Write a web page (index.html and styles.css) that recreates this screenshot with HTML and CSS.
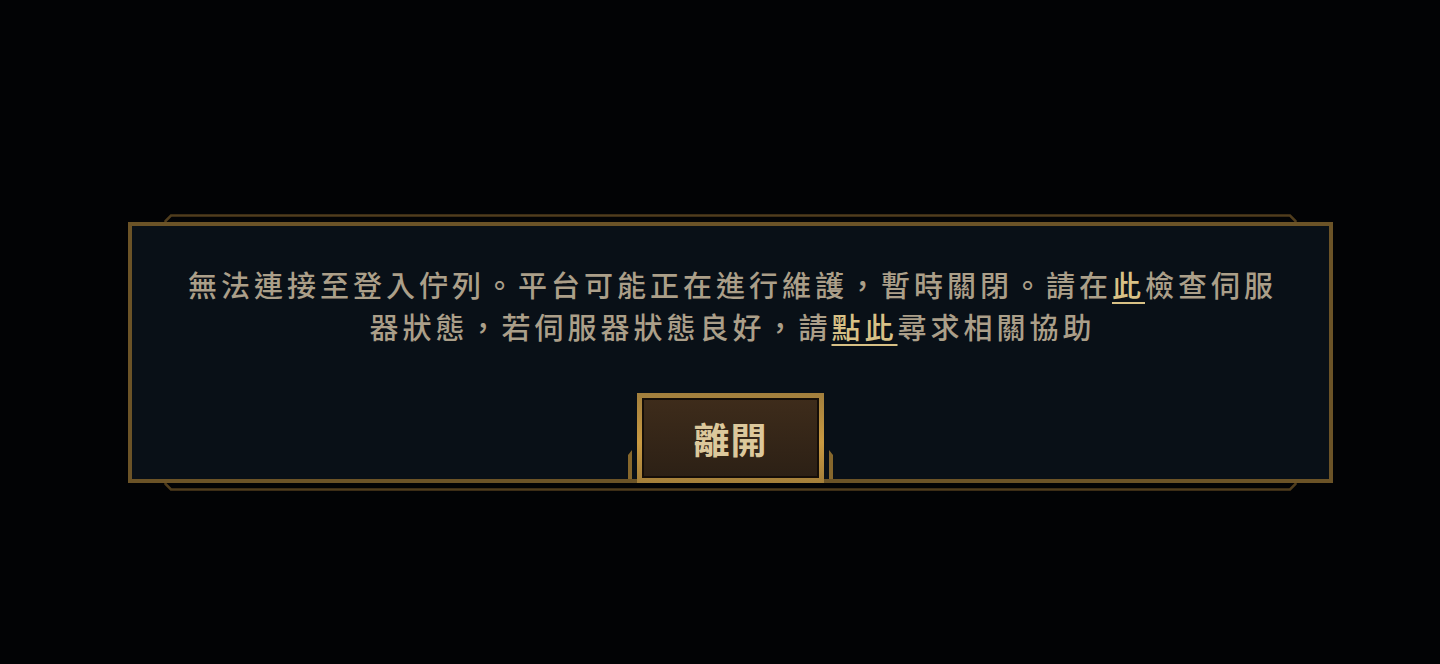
FILE: index.html
```html
<!DOCTYPE html>
<html lang="zh-Hant">
<head>
    <meta charset="UTF-8">
    <meta name="viewport" content="width=device-width, initial-scale=1.0">
    <title>登入佇列</title>
    <link rel="stylesheet" href="styles.css">
</head>
<body>
    <div class="dialog">
        <svg class="back-frame" width="1133" height="277" viewBox="0 0 1133 277">
            <polygon points="7,1.5 1126,1.5 1131.5,7 1131.5,270 1126,275.5 7,275.5 1.5,270 1.5,7" fill="none" stroke="#503d1d" stroke-width="2.5"/>
        </svg>
        <div class="box">
            <p class="message">無法連接至登入佇列。平台可能正在進行維護，暫時關閉。請在<a href="#" class="link">此</a>檢查伺服器狀態，若伺服器狀態良好，請<a href="#" class="link">點此</a>尋求相關協助</p>
            <div class="footer">
                <span class="notch notch-left"></span>
                <button class="leave-btn">離開</button>
                <span class="notch notch-right"></span>
            </div>
        </div>
    </div>
</body>
</html>
```

FILE: styles.css
```css
html, body {
    margin: 0;
    height: 100%;
}
body {
    background: #020305;
    font-family: "Noto Sans CJK TC", "Noto Sans", sans-serif;
    overflow: hidden;
}
.dialog {
    position: relative;
    width: 1205px;
    margin: 222px 0 0 128px;
}
.back-frame {
    position: absolute;
    left: 36px;
    top: -8px;
    z-index: 0;
}
.box {
    position: relative;
    z-index: 1;
    border: 4px solid #6b5327;
    background: #091017;
    padding: 37px 0 0;
}
.message {
    margin: 0;
    padding: 0 46px 0 50px;
    text-align: center;
    color: #ab9f89;
    font-size: 29px;
    font-weight: 500;
    line-height: 42px;
    letter-spacing: 4px;
}
.link {
    color: #d8c186;
    text-decoration: underline;
    text-decoration-thickness: 2px;
    text-underline-offset: 5px;
}
.footer {
    display: flex;
    justify-content: center;
    align-items: flex-end;
    gap: 5px;
    margin-top: 46px;
}
.notch {
    width: 4px;
    height: 29px;
    background: #86672c;
}
.notch-left {
    clip-path: polygon(0 5px, 100% 0, 100% 100%, 0 100%);
}
.notch-right {
    clip-path: polygon(0 0, 100% 5px, 100% 100%, 0 100%);
}
.leave-btn {
    width: 187px;
    height: 90px;
    margin-bottom: -4px;
    padding: 0;
    border: 5px solid transparent;
    background:
        linear-gradient(#3e2c1b, #2c2015) padding-box,
        linear-gradient(#a27f3d, #c99a42 55%, #a47f3a) border-box;
    box-shadow: inset 0 0 0 2px #150e08;
    color: #dcc89c;
    font-family: "Noto Sans CJK TC", sans-serif;
    font-size: 36px;
    font-weight: 700;
    letter-spacing: 1px;
    cursor: pointer;
}
```
